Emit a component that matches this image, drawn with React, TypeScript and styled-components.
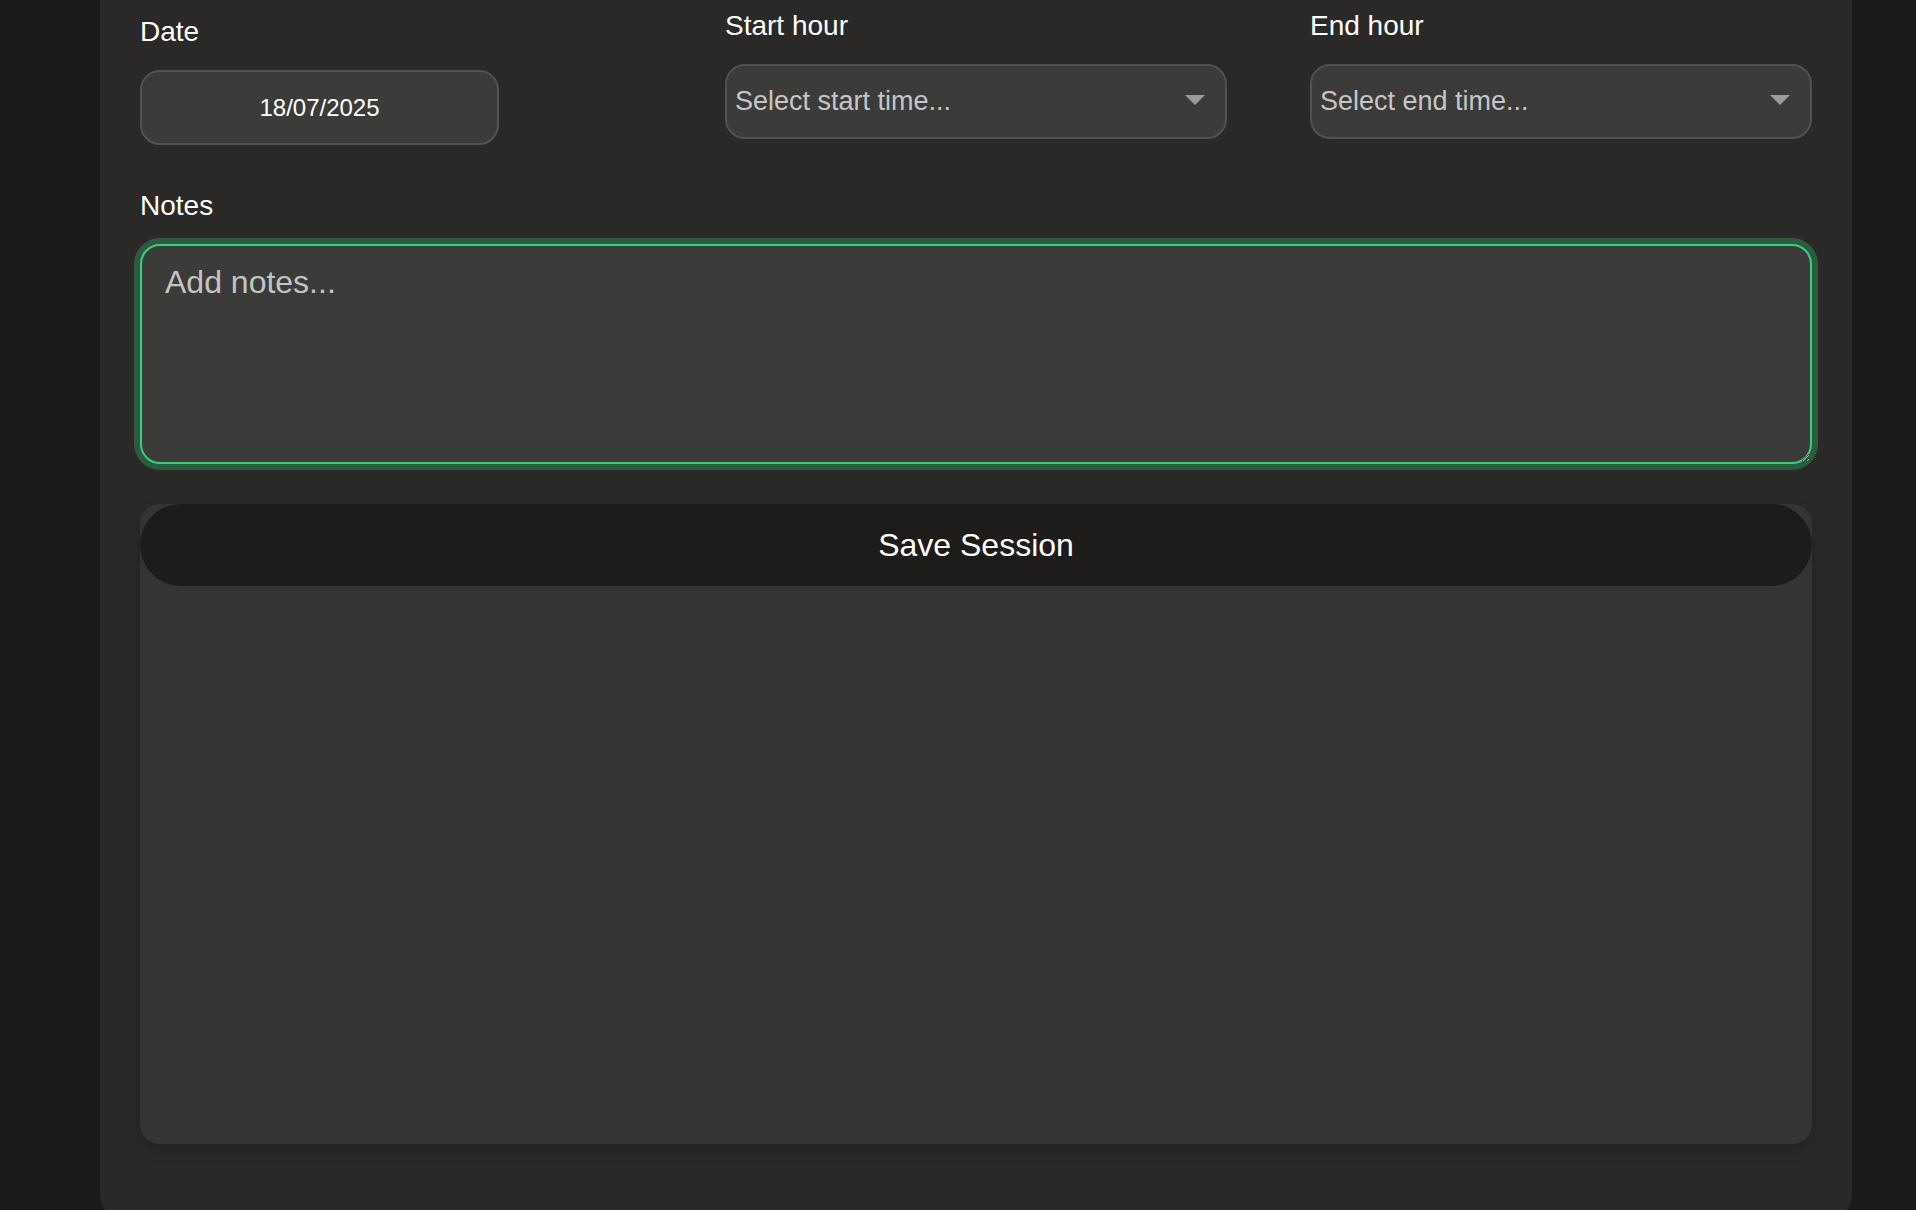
import React from "react";
import styled, { createGlobalStyle } from "styled-components";

const GlobalStyle = createGlobalStyle`
  html, body {
    margin: 0;
    padding: 0;
    height: 100%;
    overflow: hidden;
    background: #1c1b1a;
  }
  body {
    font-family: "Liberation Sans", Arial, Helvetica, sans-serif;
    color: #ffffff;
  }
  * { box-sizing: border-box; }
`;

const Page = styled.div`
  display: flex;
  padding-left: 100px;
  min-height: 1210px;
`;

const Panel = styled.main`
  width: 1752px;
  min-height: 1219px;
  background: #2a2927;
  border-radius: 0 0 24px 24px;
  padding: 10px 40px 75px;
  display: flex;
  flex-direction: column;
`;

const TopRow = styled.div`
  display: grid;
  grid-template-columns: repeat(3, 1fr);
  column-gap: 83px;
  align-items: start;
`;

const Field = styled.div<{ $offset?: number }>`
  display: flex;
  flex-direction: column;
  gap: 22px;
  margin-top: ${(p) => p.$offset ?? 0}px;
`;

const Label = styled.label`
  font-size: 28px;
  line-height: 32px;
  color: #ffffff;
`;

const DateInput = styled.input`
  width: 359px;
  height: 75px;
  border-radius: 20px;
  border: 2px solid #525150;
  background: #3b3b3a;
  color: #ffffff;
  font-family: inherit;
  font-size: 24px;
  text-align: center;
  outline: none;
  padding: 0 12px;
`;

const SelectButton = styled.button`
  width: 100%;
  height: 75px;
  border-radius: 20px;
  border: 2px solid #525150;
  background: #3b3b3a;
  color: #c6c6c6;
  font-family: inherit;
  font-size: 27px;
  display: flex;
  align-items: center;
  justify-content: space-between;
  padding: 0 20px 0 8px;
  cursor: pointer;
  text-align: left;
`;

const Caret = styled.svg`
  width: 20px;
  height: 10px;
  flex: none;
  margin-top: -4px;
`;

const NotesField = styled(Field)`
  margin-top: 45px;
`;

const NotesArea = styled.textarea`
  width: 100%;
  height: 220px;
  border-radius: 20px;
  border: 2px solid #34d17c;
  box-shadow: 0 0 0 6px rgba(52, 209, 124, 0.3);
  background: #3b3b3a;
  color: #ffffff;
  caret-color: #ffffff;
  font-family: inherit;
  font-size: 32px;
  line-height: 36px;
  padding: 18px 23px;
  outline: none;
  resize: vertical;
  display: block;

  &::placeholder {
    color: #c4c4c4;
  }
`;

const SessionsCard = styled.section`
  margin-top: 40px;
  height: 640px;
  background: #343434;
  border-radius: 20px;
  box-shadow: 0 6px 16px rgba(0, 0, 0, 0.14);
  display: flex;
  flex-direction: column;
`;

const SaveButton = styled.button`
  height: 82px;
  width: 100%;
  border: none;
  border-radius: 41px;
  background: #1d1c1a;
  color: #ffffff;
  font-family: inherit;
  font-size: 32px;
  font-weight: 500;
  cursor: pointer;
`;

function TimeSelect({ placeholder }: { placeholder: string }) {
  return (
    <SelectButton type="button">
      <span>{placeholder}</span>
      <Caret viewBox="0 0 20 10" aria-hidden="true">
        <path d="M0 0 L20 0 L10 10 Z" fill="#9b9b9b" />
      </Caret>
    </SelectButton>
  );
}

export default function App() {
  return (
    <>
      <GlobalStyle />
      <Page>
        <Panel>
          <TopRow>
            <Field $offset={6}>
              <Label>Date</Label>
              <DateInput type="text" value="18/07/2025" readOnly />
            </Field>
            <Field>
              <Label>Start hour</Label>
              <TimeSelect placeholder="Select start time..." />
            </Field>
            <Field>
              <Label>End hour</Label>
              <TimeSelect placeholder="Select end time..." />
            </Field>
          </TopRow>
          <NotesField>
            <Label>Notes</Label>
            <NotesArea placeholder="Add notes..." autoFocus />
          </NotesField>
          <SessionsCard>
            <SaveButton type="button">Save Session</SaveButton>
          </SessionsCard>
        </Panel>
      </Page>
    </>
  );
}
